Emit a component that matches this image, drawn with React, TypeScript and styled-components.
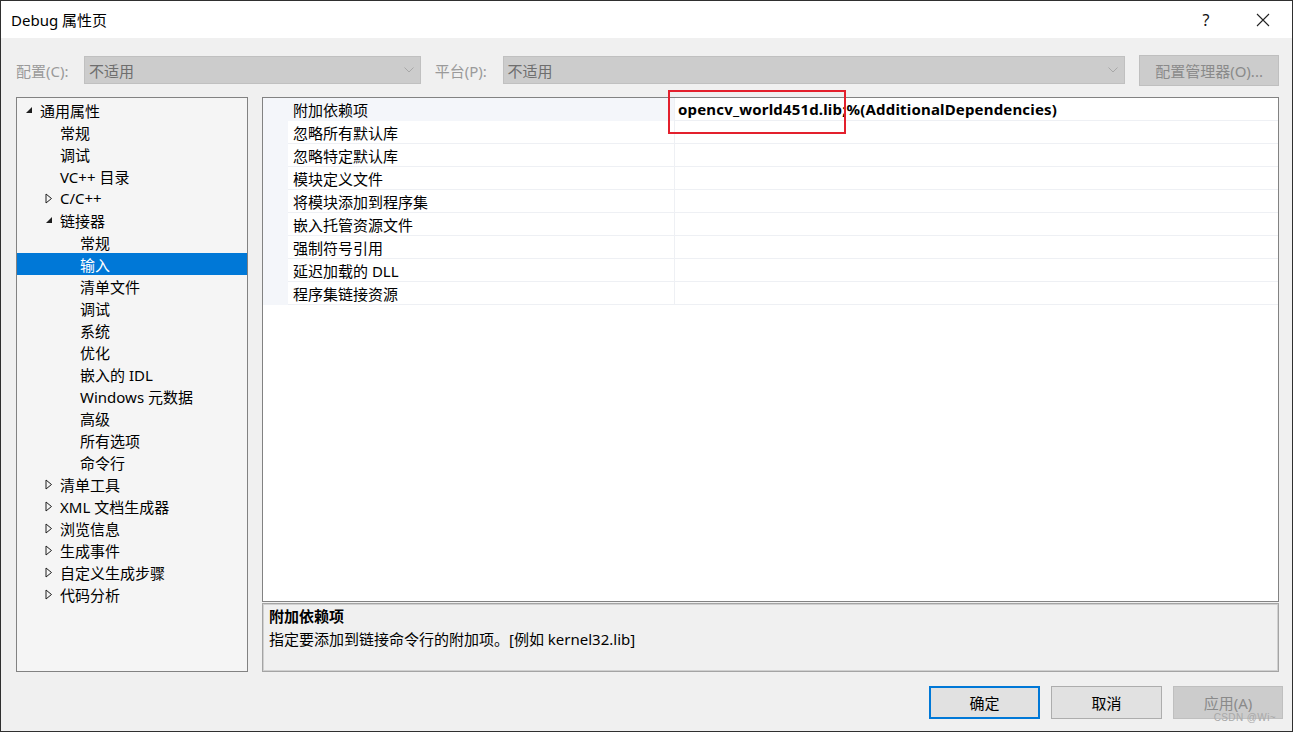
import React from "react";
import styled, { createGlobalStyle } from "styled-components";

const GlobalStyle = createGlobalStyle`
  html, body { margin: 0; padding: 0; background: #f0f0f0; }
  body { font-family: "Noto Sans", "Noto Sans CJK SC", sans-serif; }
  * { box-sizing: border-box; }
`;

const FONT = `"Noto Sans", "Noto Sans CJK SC", sans-serif`;

const Window = styled.div`
  width: 1293px;
  height: 732px;
  border: 1px solid #2f2f2f;
  background: #f0f0f0;
  display: flex;
  flex-direction: column;
  position: relative;
  overflow: hidden;
  font-family: ${FONT};
  font-size: 15px;
  color: #000;
`;

const TitleBar = styled.div`
  height: 37px;
  flex-shrink: 0;
  background: #fff;
  display: flex;
  align-items: center;
  padding-left: 10px;
  padding-right: 6px;
`;

const Title = styled.div`
  flex: 1;
  font-size: 15px;
  color: #000;
`;

const TitleButton = styled.div<{ $mr?: number }>`
  width: 46px;
  height: 36px;
  margin-right: ${(p) => p.$mr ?? 0}px;
  display: flex;
  align-items: center;
  justify-content: center;
  font-size: 16px;
  color: #111;
`;

const Body = styled.div`
  display: flex;
  flex-direction: column;
  padding: 17px 13px 0 15px;
`;

const ConfigRow = styled.div`
  display: flex;
  align-items: center;
  height: 30px;
`;

const Label = styled.span<{ $w: number }>`
  width: ${(p) => p.$w}px;
  color: #9a9a9a;
  font-size: 15px;
  white-space: nowrap;
`;

const Combo = styled.div<{ $w: number }>`
  width: ${(p) => p.$w}px;
  height: 28px;
  background: #cccccc;
  border: 1px solid #c0c0c0;
  display: flex;
  align-items: center;
  padding-left: 4px;
  padding-right: 6px;
  color: #6e6e6e;
  font-size: 15px;
`;

const ComboText = styled.span`
  flex: 1;
`;

const Gap = styled.div<{ $w: number }>`
  width: ${(p) => p.$w}px;
  flex-shrink: 0;
`;

const DisabledButton = styled.div<{ $w: number; $h: number }>`
  width: ${(p) => p.$w}px;
  height: ${(p) => p.$h}px;
  background: #cccccc;
  border: 1px solid #bfbfbf;
  color: #8a8a8a;
  display: flex;
  align-items: center;
  justify-content: center;
  font-size: 15px;
`;

const Main = styled.div`
  display: flex;
  margin-top: 12px;
  height: 575px;
`;

const TreePanel = styled.div`
  width: 232px;
  border: 1px solid #828282;
  background: #f5f5f5;
  padding-top: 1px;
`;

const TreeRow = styled.div<{ $indent: number; $selected?: boolean }>`
  height: 22px;
  display: flex;
  align-items: center;
  padding-left: ${(p) => p.$indent}px;
  background: ${(p) => (p.$selected ? "#0078d7" : "transparent")};
  color: ${(p) => (p.$selected ? "#fff" : "#000")};
  font-size: 15px;
  white-space: nowrap;
`;

const Toggle = styled.span`
  width: 15px;
  display: flex;
  align-items: center;
`;

const RightCol = styled.div`
  flex: 1;
  margin-left: 14px;
  display: flex;
  flex-direction: column;
  gap: 1px;
`;

const Grid = styled.div`
  height: 505px;
  border: 1px solid #828282;
  background: #fff;
  position: relative;
`;

const GridRow = styled.div`
  display: flex;
  height: 23px;
`;

const Gutter = styled.div`
  width: 25px;
  background: #f4f6fa;
`;

const NameCell = styled.div<{ $active?: boolean }>`
  width: 386px;
  background: ${(p) => (p.$active ? "#f4f6fa" : "#fff")};
  border-bottom: 1px solid ${(p) => (p.$active ? "#f4f6fa" : "#eef0f4")};
  display: flex;
  align-items: center;
  padding-left: 5px;
  font-size: 15px;
`;

const ValueCell = styled.div`
  flex: 1;
  border-left: 1px solid #eef0f4;
  border-bottom: 1px solid #eef0f4;
  display: flex;
  align-items: center;
  padding-left: 3px;
  font-weight: 700;
  font-size: 15px;
  letter-spacing: 0.17px;
  white-space: nowrap;
`;

const Highlight = styled.div`
  position: absolute;
  left: 405px;
  top: -8px;
  width: 178px;
  height: 44px;
  border: 2px solid #e3202d;
  pointer-events: none;
`;

const Desc = styled.div`
  height: 69px;
  border: 1px solid #a4a4a4;
  box-shadow: inset 0 0 0 1px #d0d0d0;
  background: #f0f0f0;
  padding: 1px 6px;
`;

const DescTitle = styled.div`
  font-weight: 700;
  font-size: 15px;
  height: 22px;
  line-height: 22px;
`;

const DescText = styled.div`
  font-size: 15px;
  height: 24px;
  line-height: 24px;
`;

const Footer = styled.div`
  display: flex;
  justify-content: flex-end;
  gap: 11px;
  padding: 14px 9px 0 0;
`;

const Button = styled.div<{ $primary?: boolean }>`
  width: 111px;
  height: 33px;
  background: #e1e1e1;
  border: ${(p) => (p.$primary ? "2px solid #0078d7" : "1px solid #adadad")};
  display: flex;
  align-items: center;
  justify-content: center;
  font-size: 15px;
  color: #000;
`;

const Watermark = styled.div`
  position: absolute;
  right: 16px;
  bottom: 8px;
  font-size: 10px;
  line-height: 10px;
  color: #a9a9a9;
  letter-spacing: 0.4px;
  font-family: "Liberation Sans", sans-serif;
`;

const Chevron = () => (
  <svg width="10" height="6" viewBox="0 0 10 6">
    <path d="M0.5 0.5 L5 5 L9.5 0.5" fill="none" stroke="#a8a8a8" strokeWidth="1" />
  </svg>
);

const Expanded = () => (
  <svg width="8" height="8" viewBox="0 0 8 8">
    <path d="M7 1 L7 7 L1 7 Z" fill="#1e1e1e" />
  </svg>
);

const Collapsed = () => (
  <svg width="8" height="11" viewBox="0 0 8 11">
    <path d="M1 1 L6.5 5.5 L1 10 Z" fill="none" stroke="#1e1e1e" strokeWidth="1" />
  </svg>
);

type TreeItem = { label: string; level: number; toggle?: "open" | "closed"; selected?: boolean };

const tree: TreeItem[] = [
  { label: "通用属性", level: 0, toggle: "open" },
  { label: "常规", level: 1 },
  { label: "调试", level: 1 },
  { label: "VC++ 目录", level: 1 },
  { label: "C/C++", level: 1, toggle: "closed" },
  { label: "链接器", level: 1, toggle: "open" },
  { label: "常规", level: 2 },
  { label: "输入", level: 2, selected: true },
  { label: "清单文件", level: 2 },
  { label: "调试", level: 2 },
  { label: "系统", level: 2 },
  { label: "优化", level: 2 },
  { label: "嵌入的 IDL", level: 2 },
  { label: "Windows 元数据", level: 2 },
  { label: "高级", level: 2 },
  { label: "所有选项", level: 2 },
  { label: "命令行", level: 2 },
  { label: "清单工具", level: 1, toggle: "closed" },
  { label: "XML 文档生成器", level: 1, toggle: "closed" },
  { label: "浏览信息", level: 1, toggle: "closed" },
  { label: "生成事件", level: 1, toggle: "closed" },
  { label: "自定义生成步骤", level: 1, toggle: "closed" },
  { label: "代码分析", level: 1, toggle: "closed" },
];

const props = [
  "附加依赖项",
  "忽略所有默认库",
  "忽略特定默认库",
  "模块定义文件",
  "将模块添加到程序集",
  "嵌入托管资源文件",
  "强制符号引用",
  "延迟加载的 DLL",
  "程序集链接资源",
];

export default function App() {
  return (
    <>
      <GlobalStyle />
      <Window>
        <TitleBar>
          <Title>Debug 属性页</Title>
          <TitleButton $mr={11}>?</TitleButton>
          <TitleButton>
            <svg width="14" height="14" viewBox="0 0 14 14">
              <path d="M1 1 L13 13 M13 1 L1 13" stroke="#222" strokeWidth="1.1" />
            </svg>
          </TitleButton>
        </TitleBar>
        <Body>
          <ConfigRow>
            <Label $w={68}>配置(C):</Label>
            <Combo $w={337}>
              <ComboText>不适用</ComboText>
              <Chevron />
            </Combo>
            <Gap $w={14} />
            <Label $w={68}>平台(P):</Label>
            <Combo $w={623}>
              <ComboText>不适用</ComboText>
              <Chevron />
            </Combo>
            <Gap $w={14} />
            <DisabledButton $w={140} $h={31}>配置管理器(O)...</DisabledButton>
          </ConfigRow>
          <Main>
            <TreePanel>
              {tree.map((t, i) => (
                <TreeRow
                  key={i}
                  $indent={t.toggle ? 8 + t.level * 20 : 43 + (t.level - 1) * 20}
                  $selected={t.selected}
                >
                  {t.toggle && (
                    <Toggle>{t.toggle === "open" ? <Expanded /> : <Collapsed />}</Toggle>
                  )}
                  {t.label}
                </TreeRow>
              ))}
            </TreePanel>
            <RightCol>
              <Grid>
                {props.map((p, i) => (
                  <GridRow key={i}>
                    <Gutter />
                    <NameCell $active={i === 0}>{p}</NameCell>
                    <ValueCell>{i === 0 ? "opencv_world451d.lib;%(AdditionalDependencies)" : ""}</ValueCell>
                  </GridRow>
                ))}
                <Highlight />
              </Grid>
              <Desc>
                <DescTitle>附加依赖项</DescTitle>
                <DescText>指定要添加到链接命令行的附加项。[例如 kernel32.lib]</DescText>
              </Desc>
            </RightCol>
          </Main>
        </Body>
        <Footer>
          <Button $primary>确定</Button>
          <Button>取消</Button>
          <DisabledButton $w={110} $h={33}>应用(A)</DisabledButton>
        </Footer>
        <Watermark>CSDN @Wi~</Watermark>
      </Window>
    </>
  );
}
